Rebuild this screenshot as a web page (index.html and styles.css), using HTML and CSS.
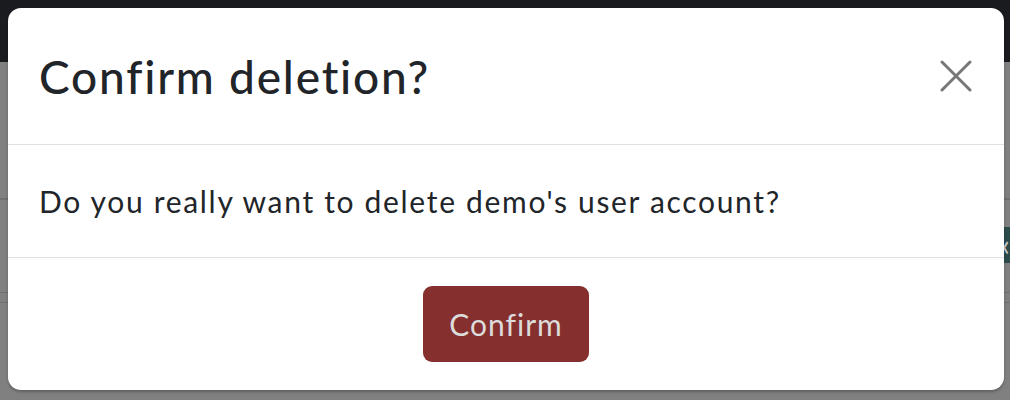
FILE: index.html
```html
<!DOCTYPE html>
<html>
<head>
<meta charset="utf-8">
<link rel="stylesheet" href="styles.css">
</head>
<body>
<div class="page">
  <div class="navbar"></div>
  <div class="content">
    <div class="row r1"></div>
    <div class="row r2"><span class="tealbtn">&lsaquo;</span></div>
    <div class="row r3"></div>
    <div class="row r4"></div>
  </div>
</div>
<div class="modal">
  <div class="modal-header">
    <h5 class="modal-title">Confirm deletion?</h5>
    <button class="btn-close" aria-label="Close">
      <svg viewBox="0 0 32 32" width="32" height="32"><path d="M2 2 L30 30 M30 2 L2 30" stroke="currentColor" stroke-width="3" stroke-linecap="round" fill="none"/></svg>
    </button>
  </div>
  <div class="modal-body">Do you really want to delete demo's user account?</div>
  <div class="modal-footer">
    <button class="btn-confirm">Confirm</button>
  </div>
</div>
</body>
</html>
```
FILE: styles.css
```css
html, body { margin: 0; padding: 0; }
body {
  width: 1010px; height: 400px; overflow: hidden;
  background: #808080;
  font-family: Lato, "Noto Sans", sans-serif;
  position: relative;
}
.navbar { height: 62px; background: #1a1b1f; }
.content { display: flex; flex-direction: column; }
.row { border-bottom: 1px solid #6f6f6f; }
.r1 { height: 136px; }
.r2 { height: 0; position: relative; }
.tealbtn {
  position: absolute; right: 0; top: 28px; width: 12px; height: 36px;
  background: #2c4b4b; color: #c8c8c8; font-size: 30px; line-height: 34px;
  text-align: right; overflow: hidden;
}
.r3 { height: 92px; }
.r4 { height: 9px; }
.modal {
  position: absolute; top: 8px; left: 8px; width: 996px; height: 382px;
  background: #fff; border-radius: 13px;
  box-shadow: 0 2px 3px rgba(0,0,0,0.25);
  display: flex; flex-direction: column; overflow: hidden;
  color: #212529;
}
.modal-header {
  height: 137px; box-sizing: border-box;
  border-bottom: 1px solid #dee2e6;
  display: flex; align-items: center; justify-content: space-between;
  padding: 0 32px 0 31px;
}
.modal-title { margin: 0; font-size: 46px; font-weight: 500; letter-spacing: 1.8px; }
.btn-close {
  border: 0; background: none; padding: 0; width: 32px; height: 32px;
  color: #777; cursor: pointer; display: flex;
}
.modal-body {
  height: 113px; box-sizing: border-box;
  border-bottom: 1px solid #dee2e6;
  display: flex; align-items: center;
  padding: 0 31px;
  font-size: 30px; letter-spacing: 1.68px;
}
.modal-footer { flex: 1; display: flex; align-items: center; justify-content: center; }
.btn-confirm {
  width: 166px; height: 76px; border: 0; border-radius: 9px;
  background: #85302f; color: #dcdcdc;
  font-family: Lato, "Noto Sans", sans-serif; font-size: 30px; letter-spacing: 1px;
  padding: 0;
}
```
